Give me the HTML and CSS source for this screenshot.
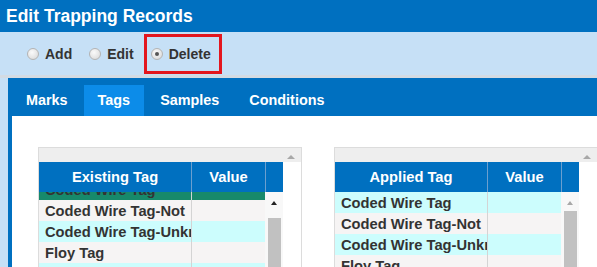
FILE: index.html
```html
<!DOCTYPE html>
<html lang="en">
<head>
    <meta charset="UTF-8">
    <title>Edit Trapping Records</title>
    <link rel="stylesheet" href="styles.css">
</head>
<body>
    <div class="title-bar">Edit Trapping Records</div>

    <div class="mode-bar">
        <label class="mode"><span class="radio"></span>Add</label>
        <label class="mode"><span class="radio"></span>Edit</label>
        <label class="mode highlight"><span class="radio checked"></span>Delete</label>
    </div>

    <div class="tab-panel">
        <div class="tabs">
            <div class="tab">Marks</div>
            <div class="tab active">Tags</div>
            <div class="tab">Samples</div>
            <div class="tab">Conditions</div>
        </div>
        <div class="tab-content">
            <div class="grid-box">
                <div class="grid-top"></div>
                <span class="outer-arrow"></span>
                <div class="grid">
                    <div class="grid-head">
                        <div class="col-name">Existing Tag</div>
                        <div class="col-value">Value</div>
                        <div class="col-scroll"></div>
                    </div>
                    <div class="grid-body">
                        <div class="rows scrolled">
                            <div class="row selected"><div class="col-name">Coded Wire Tag</div><div class="col-value"></div></div>
                            <div class="row"><div class="col-name">Coded Wire Tag-Not</div><div class="col-value"></div></div>
                            <div class="row alt"><div class="col-name">Coded Wire Tag-Unknown</div><div class="col-value"></div></div>
                            <div class="row"><div class="col-name">Floy Tag</div><div class="col-value"></div></div>
                            <div class="row alt"><div class="col-name">PIT Tag</div><div class="col-value"></div></div>
                        </div>
                        <div class="scrollbar">
                            <span class="arrow dark"></span>
                            <div class="thumb thumb-low"></div>
                        </div>
                    </div>
                </div>
            </div>

            <div class="grid-box">
                <div class="grid-top"></div>
                <span class="outer-arrow"></span>
                <div class="grid">
                    <div class="grid-head">
                        <div class="col-name">Applied Tag</div>
                        <div class="col-value">Value</div>
                        <div class="col-scroll"></div>
                    </div>
                    <div class="grid-body">
                        <div class="rows">
                            <div class="row alt"><div class="col-name">Coded Wire Tag</div><div class="col-value"></div></div>
                            <div class="row"><div class="col-name">Coded Wire Tag-Not</div><div class="col-value"></div></div>
                            <div class="row alt"><div class="col-name">Coded Wire Tag-Unknown</div><div class="col-value"></div></div>
                            <div class="row"><div class="col-name">Floy Tag</div><div class="col-value"></div></div>
                        </div>
                        <div class="scrollbar">
                            <span class="arrow"></span>
                            <div class="thumb"></div>
                        </div>
                    </div>
                </div>
            </div>
        </div>
    </div>
</body>
</html>
```

FILE: styles.css
```css
body {
    margin: 0;
    height: 267px;
    overflow: hidden;
    font-family: "Liberation Sans", Arial, sans-serif;
    font-weight: bold;
    background-color: #c6e0f6;
    color: #333;
}
.title-bar {
    height: 32px;
    line-height: 32px;
    padding-left: 6px;
    background-color: #0070c0;
    color: #fff;
    font-size: 17.5px;
}
.mode-bar {
    display: flex;
    align-items: center;
    height: 43px;
    padding-left: 27px;
    border-bottom: 3px solid #d3dbe3;
    font-size: 14px;
}
.mode {
    display: flex;
    align-items: center;
    gap: 6px;
    margin-right: 17px;
}
.mode.highlight {
    height: 34px;
    margin-left: -7px;
    padding: 0 8px 0 4px;
    border: 3px solid #e3161e;
}
.radio {
    width: 10px;
    height: 10px;
    border-radius: 50%;
    border: 1px solid #b4b4b4;
    background: radial-gradient(circle at 40% 35%, #fafafa, #d6d6d6);
    position: relative;
}
.radio.checked::after {
    content: "";
    position: absolute;
    left: 3px;
    top: 3px;
    width: 4px;
    height: 4px;
    border-radius: 50%;
    background-color: #555;
}
.tab-panel {
    margin-left: 8px;
    padding: 7px 0 0 4px;
    background-color: #0070c0;
}
.tabs {
    display: flex;
    gap: 2px;
    height: 31px;
}
.tab {
    padding: 0 14px;
    line-height: 31px;
    font-size: 14.4px;
    color: #fff;
}
.tab.active {
    background-color: #0c8ce9;
}
.tab-content {
    display: flex;
    gap: 32px;
    height: 120px;
    padding: 31px 0 0 26px;
    background-color: #fff;
}
.grid-box {
    position: relative;
    flex: none;
    width: 262px;
    border: 1px solid #dcdcdc;
    border-bottom: none;
}
.grid-top {
    height: 14px;
    background-color: #eeeeee;
}
.outer-arrow {
    position: absolute;
    right: 6px;
    top: 7px;
    border-left: 4px solid transparent;
    border-right: 4px solid transparent;
    border-bottom: 4px solid #a8a8a8;
}
.grid {
    width: 244px;
    font-size: 14.7px;
}
.grid-head {
    display: flex;
    height: 30px;
    line-height: 31px;
    background-color: #0070c0;
    color: #fff;
    text-align: center;
}
.grid-head .col-value,
.grid-head .col-scroll {
    border-left: 1px solid #6b9fcf;
}
.col-name {
    width: 152px;
    flex: none;
    white-space: nowrap;
    overflow: hidden;
}
.col-value {
    width: 73px;
    flex: none;
}
.col-scroll {
    flex: 1;
}
.grid-body {
    display: flex;
    height: 75px;
    overflow: hidden;
}
.rows {
    width: 226px;
}
.rows.scrolled {
    margin-top: -13px;
}
.row {
    display: flex;
    height: 21px;
    line-height: 22px;
    background-color: #f6f4f4;
}
.row.alt {
    background-color: #ccfdfd;
}
.row.selected {
    background-color: #17896b;
}
.row .col-name {
    padding-left: 6px;
    width: 146px;
}
.row .col-value {
    border-left: 1px solid #d4d4d4;
}
.scrollbar {
    flex: 1;
    display: flex;
    flex-direction: column;
    align-items: center;
    background-color: #f8f8f8;
}
.arrow {
    margin-top: 9px;
    border-left: 3px solid transparent;
    border-right: 3px solid transparent;
    border-bottom: 4px solid #a8a8a8;
}
.arrow.dark {
    border-bottom-color: #222;
}
.thumb {
    width: 13px;
    flex: 1;
    margin-top: 6px;
    background-color: #c1c1c1;
}
.thumb-low {
    margin-top: 13px;
}
```
